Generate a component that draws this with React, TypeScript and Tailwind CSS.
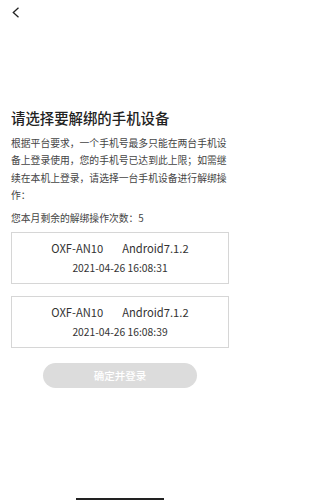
import React from 'react';

const devices = [
  { model: 'OXF-AN10', os: 'Android7.1.2', time: '2021-04-26 16:08:31' },
  { model: 'OXF-AN10', os: 'Android7.1.2', time: '2021-04-26 16:08:39' },
];

export default function App() {
  return (
    <div
      className="h-[500px] w-[240px] bg-white flex flex-col overflow-hidden text-[#333]"
      style={{ fontFamily: '"Noto Sans CJK SC", "Noto Sans", sans-serif' }}
    >
      {/* back */}
      <div className="pl-[12px] pt-[7px] h-[20px]">
        <svg width="8" height="11" viewBox="0 0 8 11" fill="none">
          <path d="M6.5 0.8 L1.3 5.5 L6.5 10.2" stroke="#222" strokeWidth="1.3" />
        </svg>
      </div>

      <div className="px-[11px] flex flex-col">
        <h1 className="mt-[88px] text-[14.4px] leading-[20px] font-medium text-[#222]">请选择要解绑的手机设备</h1>

        <p className="mt-[7px] text-[9.8px] leading-[17.4px] text-[#444]">
          根据平台要求，一个手机号最多只能在两台手机设备上登录使用，您的手机号已达到此上限；如需继续在本机上登录，请选择一台手机设备进行解绑操作：
        </p>

        <p className="mt-[5px] text-[9.8px] leading-[17.4px] text-[#444]">您本月剩余的解绑操作次数：5</p>

        <div className="mt-[5px] flex flex-col gap-[12px]">
          {devices.map((d, i) => (
            <div key={i} className="border border-[#d6d6d6] h-[52px] flex flex-col items-center pt-[7px]">
              <div className="flex gap-[19px] text-[11.2px] leading-[16px] text-[#333]">
                <span>{d.model}</span>
                <span>{d.os}</span>
              </div>
              <div className="mt-[5px] text-[10.3px] leading-[14px] text-[#333]">{d.time}</div>
            </div>
          ))}
        </div>

        <div className="mt-[15px] flex justify-center">
          <button className="w-[154px] h-[25px] rounded-full bg-[#dcdcdc] text-white text-[10.5px] font-medium">
            确定并登录
          </button>
        </div>
      </div>

      <div className="mt-auto h-[3px] flex justify-center items-end">
        <div className="w-[88px] h-[2px] bg-[#222]" />
      </div>
    </div>
  );
}
